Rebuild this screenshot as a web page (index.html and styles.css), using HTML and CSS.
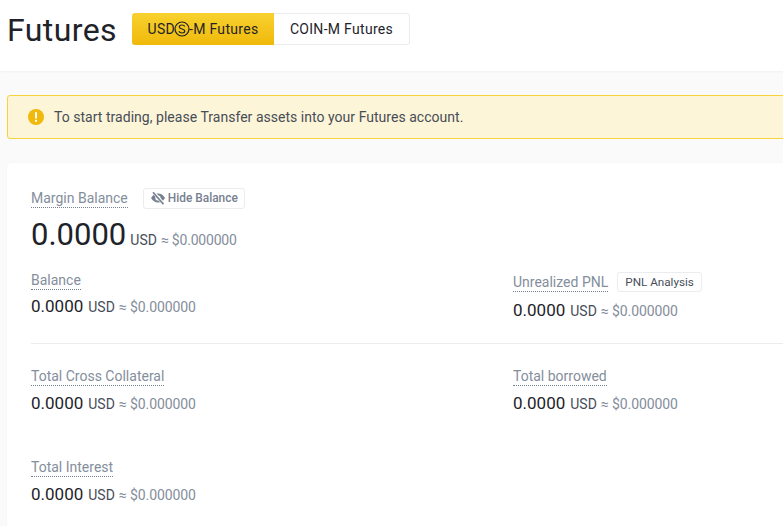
FILE: index.html
```html
<!DOCTYPE html>
<html lang="en">
<head>
<meta charset="utf-8">
<title>Futures</title>
<link rel="stylesheet" href="styles.css">
</head>
<body>
<div class="page">
  <header class="top">
    <h1 class="title">Futures</h1>
    <div class="tabs">
      <button class="tab tab-on">USD<svg class="coin" viewBox="0 0 16 16" width="16" height="16"><circle cx="8" cy="8" r="7" fill="none" stroke="#1e2329" stroke-width="1.200"/><path d="M10.8 5.600C10.300 4.500 9.300 4 8 4 6.500 4 5.300 4.700 5.300 6c0 2.600 5.500 1.400 5.500 4.100 0 1.300-1.300 1.900-2.800 1.900-1.500 0-2.600-.6-3-1.700" fill="none" stroke="#1e2329" stroke-width="1.200"/></svg>-M Futures</button>
      <button class="tab">COIN-M Futures</button>
    </div>
  </header>
  <main class="content">
    <div class="alert">
      <svg class="alert-icon" viewBox="0 0 16 16" width="16" height="16"><circle cx="8" cy="8" r="8" fill="#f0b90b"/><rect x="7" y="3.2" width="2" height="6.2" fill="#fff"/><rect x="7" y="10.8" width="2" height="2" fill="#fff"/></svg>
      <span>To start trading, please Transfer assets into your Futures account.</span>
    </div>
    <section class="card">
      <div class="head-row">
        <span class="label">Margin Balance</span>
        <button class="chip chip-hide"><svg viewBox="0 0 16 16" width="16" height="16"><path d="M1 8c1.800-3 4.200-4.400 7-4.400S13.200 5 15 8c-1.800 3-4.200 4.400-7 4.400S2.800 11 1 8z" fill="#76808f"/><circle cx="8" cy="8" r="2.600" fill="#fff"/><path d="M3 1.800l10.500 12" stroke="#fff" stroke-width="3.200"/><path d="M3 2.200l10.500 12" stroke="#76808f" stroke-width="1.700"/></svg>Hide Balance</button>
      </div>
      <div class="big-line"><span class="big">0.0000</span><span class="unit">USD</span><span class="approx">≈ $0.000000</span></div>
      <div class="grid">
        <div class="cell cell-a">
          <div class="cell-head"><span class="label">Balance</span></div>
          <div class="line"><span class="num">0.0000</span><span class="unit">USD</span><span class="approx">≈ $0.000000</span></div>
        </div>
        <div class="cell cell-b">
          <div class="cell-head"><span class="label">Unrealized PNL</span><button class="chip chip-pnl">PNL Analysis</button></div>
          <div class="line"><span class="num">0.0000</span><span class="unit">USD</span><span class="approx">≈ $0.000000</span></div>
        </div>
      </div>
      <hr class="rule">
      <div class="grid">
        <div class="cell">
          <div class="cell-head"><span class="label">Total Cross Collateral</span></div>
          <div class="line"><span class="num">0.0000</span><span class="unit">USD</span><span class="approx">≈ $0.000000</span></div>
        </div>
        <div class="cell">
          <div class="cell-head"><span class="label">Total borrowed</span></div>
          <div class="line"><span class="num">0.0000</span><span class="unit">USD</span><span class="approx">≈ $0.000000</span></div>
        </div>
        <div class="cell cell-last">
          <div class="cell-head"><span class="label">Total Interest</span></div>
          <div class="line"><span class="num">0.0000</span><span class="unit">USD</span><span class="approx">≈ $0.000000</span></div>
        </div>
      </div>
    </section>
  </main>
</div>
</body>
</html>
```
FILE: styles.css
```css
html, body { margin: 0; padding: 0; height: 526px; overflow: hidden; background: #fafafa; }
* { box-sizing: border-box; }
body { font-family: "Roboto", "Inter", sans-serif; color: #1e2329; }
.page { width: 1100px; height: 526px; overflow: hidden; }
.top { height: 71px; background: #fff; box-shadow: 0 1px 2px rgba(0,0,0,.04); display: flex; align-items: flex-start; padding: 13px 0 0 7px; }
.title { margin: 0; font-size: 32px; line-height: 34px; font-weight: 400; width: 125px; letter-spacing: .4px; }
.tabs { display: flex; height: 32px; }
.tab { font: inherit; font-size: 14px; font-weight: 400; letter-spacing: .3px; color: #1e2329; background: #fff; border: 1px solid #eaecef; border-left: 0; border-radius: 0 3px 3px 0; padding: 0; width: 136px; height: 32px; display: flex; align-items: center; justify-content: center; }
.tab-on { width: 142px; border: 0; border-radius: 3px 0 0 3px; background: linear-gradient(180deg, #f8d12f, #f0b90b); }
.coin { margin: 0 -1px; }
.content { padding: 24px 0 0 7px; }
.alert { height: 44px; background: #fdf5d8; border: 1px solid #f8d33a; border-radius: 3px; display: flex; align-items: center; gap: 10px; padding-left: 20px; font-size: 14px; letter-spacing: .03px; color: #474d57; }
.card { margin-top: 24px; background: #fff; border-radius: 4px; box-shadow: 0 0 2px rgba(0,0,0,.06); padding: 24px; height: 400px; }
.head-row { display: flex; align-items: center; gap: 15px; height: 22px; }
.label { font-size: 14px; line-height: 18px; color: #848e9c; border-bottom: 1px dotted #76808f; }
.chip { font: inherit; background: #fff; border: 1px solid #eaecef; border-radius: 3px; padding: 0 7px; height: 21px; display: inline-flex; align-items: center; font-size: 12px; }
.chip-hide { color: #76808f; font-weight: 500; gap: 2px; padding: 0 6px; font-size: 11.9px; }
.chip-pnl { color: #474d57; margin-left: 9px; height: 20px; font-size: 11.7px; }
.big-line { display: flex; align-items: baseline; margin-top: 7px; height: 38px; }
.big { font-size: 31px; line-height: 38px; color: #1e2329; margin-right: 4px; }
.unit { font-size: 14px; color: #474d57; margin-right: 4px; }
.approx { font-size: 14px; color: #848e9c; letter-spacing: -.2px; }
.grid { display: grid; grid-template-columns: 482px 482px; }
.cell-head { display: flex; align-items: center; height: 22px; }
.line { display: flex; align-items: baseline; height: 24px; margin-top: 4px; }
.line .approx { letter-spacing: -.1px; }
.num { font-size: 17px; line-height: 24px; color: #1e2329; margin-right: 5px; }
.cell-a { padding-top: 15px; }
.cell-a .line { margin-top: 3px; }
.cell-b { padding-top: 17px; }
.cell-b .line { margin-top: 5px; }
.rule { border: 0; border-top: 1px solid #eaecef; margin: 21px 0 21px; }
.cell-last { grid-column: 1; margin-top: 41px; }
```
